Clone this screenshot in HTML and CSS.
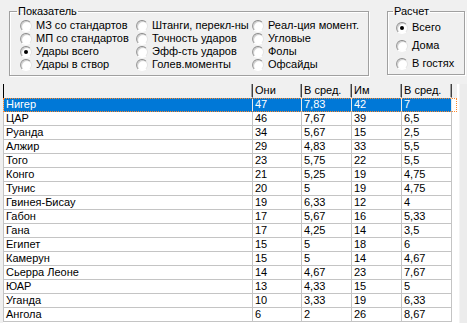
FILE: index.html
```html
<!DOCTYPE html>
<html>
<head>
	<meta charset="utf-8">
	<title>Показатели</title>
	<link rel="stylesheet" href="styles.css">
</head>
<body>
<div class="top">
	<fieldset class="box box-ind">
		<legend>Показатель</legend>
		<div class="opts">
			<label class="opt"><span class="radio"></span>МЗ со стандартов</label>
			<label class="opt"><span class="radio"></span>МП со стандартов</label>
			<label class="opt"><span class="radio on"></span>Удары всего</label>
			<label class="opt"><span class="radio"></span>Удары в створ</label>
			<label class="opt"><span class="radio"></span>Штанги, перекл-ны</label>
			<label class="opt"><span class="radio"></span>Точность ударов</label>
			<label class="opt"><span class="radio"></span>Эфф-сть ударов</label>
			<label class="opt"><span class="radio"></span>Голев.моменты</label>
			<label class="opt"><span class="radio"></span>Реал-ция момент.</label>
			<label class="opt"><span class="radio"></span>Угловые</label>
			<label class="opt"><span class="radio"></span>Фолы</label>
			<label class="opt"><span class="radio"></span>Офсайды</label>
		</div>
	</fieldset>
	<fieldset class="box box-calc">
		<legend>Расчет</legend>
		<div class="calc">
			<label class="opt"><span class="radio on"></span>Всего</label>
			<label class="opt"><span class="radio"></span>Дома</label>
			<label class="opt"><span class="radio"></span>В гостях</label>
		</div>
	</fieldset>
</div>
<div class="grid">
	<div class="table">
		<div class="row head"><span></span><span>Они</span><span>В сред.</span><span>Им</span><span>В сред.</span></div>
		<div class="row sel"><span>Нигер</span><span>47</span><span>7,83</span><span>42</span><span>7</span></div>
		<div class="row"><span>ЦАР</span><span>46</span><span>7,67</span><span>39</span><span>6,5</span></div>
		<div class="row"><span>Руанда</span><span>34</span><span>5,67</span><span>15</span><span>2,5</span></div>
		<div class="row"><span>Алжир</span><span>29</span><span>4,83</span><span>33</span><span>5,5</span></div>
		<div class="row"><span>Того</span><span>23</span><span>5,75</span><span>22</span><span>5,5</span></div>
		<div class="row"><span>Конго</span><span>21</span><span>5,25</span><span>19</span><span>4,75</span></div>
		<div class="row"><span>Тунис</span><span>20</span><span>5</span><span>19</span><span>4,75</span></div>
		<div class="row"><span>Гвинея-Бисау</span><span>19</span><span>6,33</span><span>12</span><span>4</span></div>
		<div class="row"><span>Габон</span><span>17</span><span>5,67</span><span>16</span><span>5,33</span></div>
		<div class="row"><span>Гана</span><span>17</span><span>4,25</span><span>14</span><span>3,5</span></div>
		<div class="row"><span>Египет</span><span>15</span><span>5</span><span>18</span><span>6</span></div>
		<div class="row"><span>Камерун</span><span>15</span><span>5</span><span>14</span><span>4,67</span></div>
		<div class="row"><span>Сьерра Леоне</span><span>14</span><span>4,67</span><span>23</span><span>7,67</span></div>
		<div class="row"><span>ЮАР</span><span>13</span><span>4,33</span><span>15</span><span>5</span></div>
		<div class="row"><span>Уганда</span><span>10</span><span>3,33</span><span>19</span><span>6,33</span></div>
		<div class="row"><span>Ангола</span><span>6</span><span>2</span><span>26</span><span>8,67</span></div>
	</div>
	<div class="scroll"></div>
</div>
</body>
</html>
```

FILE: styles.css
```css
body {
	margin: 0;
	width: 467px;
	height: 323px;
	overflow: hidden;
	background-color: #f0f0f0;
	font-family: "Liberation Sans", Arial, sans-serif;
	font-size: 11px;
	line-height: 13px;
	color: #000;
}
.top {
	display: flex;
	align-items: flex-start;
	height: 84px;
	padding: 5px 0 0 9px;
	box-sizing: border-box;
}
.box {
	margin: 0;
	border: 1px solid #a0a0a0;
	box-shadow: inset 1px 1px 0 #fff, 1px 1px 0 #fff;
	box-sizing: border-box;
}
.box legend {
	padding: 0 1px;
	margin-left: -3px;
}
.box-ind {
	width: 360px;
	padding: 1px 0 4px 10px;
}
.box-calc {
	width: 78px;
	margin-left: 18px;
	padding: 3px 0 4px 8px;
}
.opts {
	display: grid;
	grid-template-columns: repeat(3, 116px);
	grid-template-rows: repeat(4, 13px);
	grid-auto-flow: column;
}
.calc {
	display: flex;
	flex-direction: column;
	gap: 5px;
}
.opt {
	display: flex;
	align-items: center;
	height: 13px;
	white-space: nowrap;
}
.radio {
	position: relative;
	width: 10px;
	height: 10px;
	margin-right: 4px;
	border: 1px solid;
	border-color: #8a8a8a #e4e4e4 #ffffff #9a9a9a;
	border-radius: 50%;
	background: radial-gradient(circle at 60% 60%, #fff 45%, #e6e6e6 100%);
	box-shadow: inset 1px 1px 0 #d0d0d0;
	flex-shrink: 0;
}
.radio.on:after {
	content: "";
	position: absolute;
	left: 3px;
	top: 3px;
	width: 4px;
	height: 4px;
	border-radius: 50%;
	background: #000;
}
.grid {
	display: flex;
	margin-left: 3px;
	height: 239px;
}
.table {
	width: 456px;
	background: #fff;
}
.scroll {
	flex: 1;
	background: #ececec;
	border-left: 1px solid #f4f4f4;
}
.row {
	display: grid;
	grid-template-columns: 249px 49px 50px 50px 50px;
	width: 454px;
	box-sizing: border-box;
	border-left: 1px solid #c4c4c4;
}
.row span {
	height: 13px;
	padding-left: 2px;
	border-right: 1px solid #c4c4c4;
	border-bottom: 1px solid #c4c4c4;
	white-space: nowrap;
	overflow: hidden;
}
.head {
	border-left-color: #000;
	background: #f0f0f0;
}
.head span {
	border-right-color: #404040;
	border-bottom-color: #f0f0f0;
	box-shadow: inset -1px 0 0 #a0a0a0;
}
.sel {
	outline: 1px dotted #ff8728;
	outline-offset: -1px;
}
.sel span {
	background: #0078d7;
	color: #fff;
	border-right-color: #e8e8e8;
	border-bottom-color: #0078d7;
}
```
